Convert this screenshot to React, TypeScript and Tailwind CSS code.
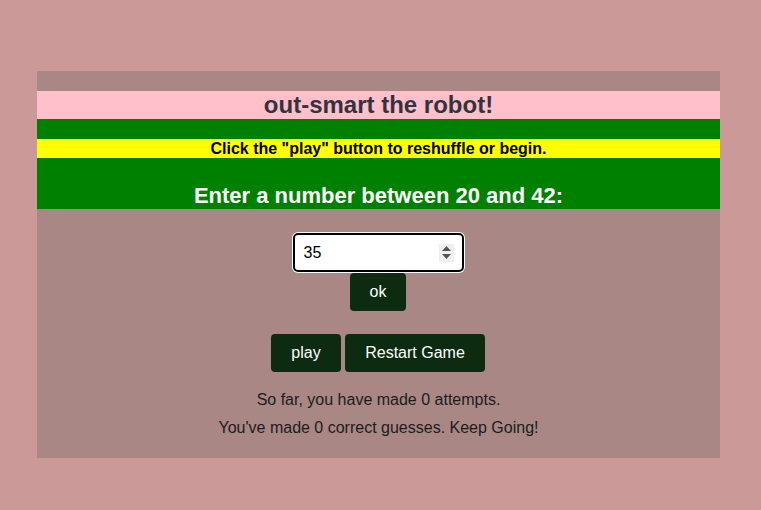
import { useState } from "react";

export default function App() {
  const [value, setValue] = useState("35");

  return (
    <div className="min-h-[510px] w-full bg-[#cc9999] pt-[71px] font-['Liberation_Sans',Arial,sans-serif]">
      <div className="mx-[37px] w-[683px] bg-[#a98785] pt-5 pb-4 text-center">
        <h1 className="h-[28px] bg-[#ffc0cb] text-[24px] leading-[28px] font-bold text-[#33333d]">
          out-smart the robot!
        </h1>
        <div className="bg-[#008000] pt-5">
          <p className="h-[19px] bg-[#ffff00] text-[16px] leading-[19px] font-bold text-black">
            Click the "play" button to reshuffle or begin.
          </p>
          <h2 className="pt-[25px] text-[22px] leading-[26px] font-bold text-white">
            Enter a number between 20 and 42:
          </h2>
        </div>

        <div className="mt-[23px] flex flex-col items-center pr-px">
          <div className="relative h-[41px] w-[173px] rounded-[6px] bg-white p-px">
            <div className="flex h-full w-full items-center rounded-[5px] border-2 border-black bg-white pl-[9px] pr-[8px]">
              <input
                type="text"
                value={value}
                onChange={(e) => setValue(e.target.value)}
                className="w-full bg-transparent text-[16px] text-black outline-none"
              />
              <div className="flex h-[18px] w-[15px] shrink-0 flex-col items-center justify-center gap-[3px] bg-[#efefef]">
                <svg width="9" height="5" viewBox="0 0 9 5">
                  <path d="M0 5 L4.5 0 L9 5 Z" fill="#555" />
                </svg>
                <svg width="9" height="5" viewBox="0 0 9 5">
                  <path d="M0 0 L4.5 5 L9 0 Z" fill="#555" />
                </svg>
              </div>
            </div>
          </div>
          <button className="h-[38px] w-[56px] rounded-[4px] bg-[#0c2b10] text-[16px] text-white">
            ok
          </button>
        </div>

        <div className="mt-[23px] flex justify-center gap-1 pr-px">
          <button className="h-[38px] w-[70px] rounded-[4px] bg-[#0c2b10] text-[16px] text-white">
            play
          </button>
          <button className="h-[38px] w-[140px] rounded-[4px] bg-[#0c2b10] text-[16px] text-white">
            Restart Game
          </button>
        </div>

        <div className="mt-[14px] text-[16px] leading-[28px] text-[#1c1c1c]">
          <p>So far, you have made 0 attempts.</p>
          <p>You've made 0 correct guesses. Keep Going!</p>
        </div>
      </div>
    </div>
  );
}
